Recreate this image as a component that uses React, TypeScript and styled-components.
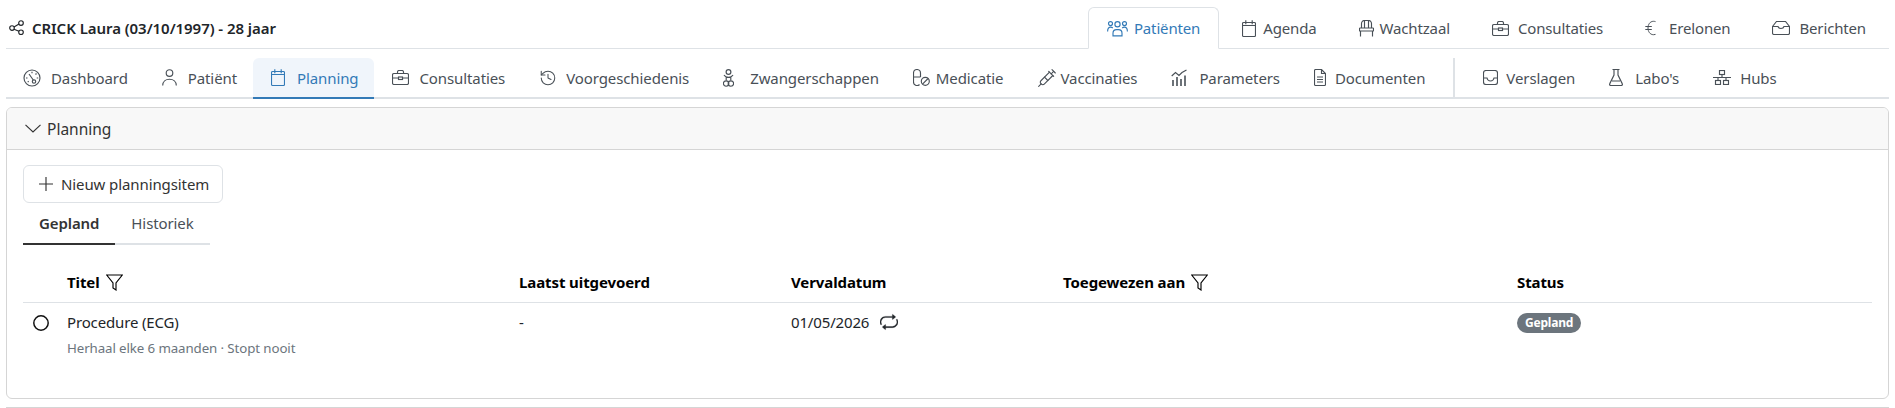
import React from "react";
import styled, { createGlobalStyle } from "styled-components";
import { History, Syringe } from "lucide-react";
import { BsRepeat } from "react-icons/bs";

const Global = createGlobalStyle`
  html, body { margin: 0; padding: 0; background: #fff; }
  body { font-family: "Noto Sans", sans-serif; font-size: 15px; color: #212529; }
  * { box-sizing: border-box; }
`;
const Svg = styled.svg`flex: none; fill: none; stroke: currentColor; stroke-width: 1.15;`;
type IconProps = { w: number; h: number; children: React.ReactNode };
const Icon = ({ w, h, children }: IconProps) => <Svg width={w} height={h} viewBox={`0 0 ${w} ${h}`}>{children}</Svg>;

const Share = () => <Icon w={15} h={15}><circle cx="3" cy="8" r="2.3" /><circle cx="12" cy="3" r="2.3" /><circle cx="12" cy="12.3" r="2.3" /><path d="M5 7 10 4M5 9.2 10 11.3" /></Icon>;
const Users = () => <Icon w={21} h={17}><circle cx="10.5" cy="4.2" r="2.6" /><circle cx="3.5" cy="3.6" r="2" /><circle cx="17.5" cy="3.6" r="2" /><path d="M6 15.8v-2.6c0-2 1.6-3.6 3.6-3.6h1.8c2 0 3.6 1.6 3.6 3.6v2.6zM.6 11.5c0-3 1.2-4.4 3-4.4 1 0 1.6.3 2.2.9M20.4 11.5c0-3-1.2-4.4-3-4.4-1 0-1.6.3-2.2.9" /></Icon>;
const Calendar = () => <Icon w={14} h={17}><rect x=".5" y="2.5" width="13" height="14" rx="1" /><path d="M.5 5.5h13M3.8.3v4M10.2.3v4" /></Icon>;
const Chair = () => <Icon w={15} h={17}><path d="M2.5 8V3.5a3 3 0 0 1 3-3h4a3 3 0 0 1 3 3V8M5.5 1v7M9.5 1v7M1.500 11v5.500M13.500 11v5.500" /><rect x=".5" y="8" width="14" height="3" rx=".6" /></Icon>;
const Briefcase = () => <Icon w={17} h={15}><rect x=".5" y="3.5" width="16" height="11" rx="1.5" /><path d="M5.5 3.5V2A1.5 1.5 0 0 1 7 .5h3A1.5 1.5 0 0 1 11.5 2v1.5M.5 8h6M10.5 8h6" /><rect x="6.5" y="7" width="4" height="2.5" /></Icon>;
const Euro = () => <Icon w={11} h={16}><path strokeWidth="1" d="M10.500 1.600a7 7 0 0 0-2-.3C5 1.300 3 4.500 3 8s2 6.700 5.500 6.700c.7 0 1.400-.1 2-.3M.3 6.500h6.500M.3 9.500h6.500" /></Icon>;
const Envelope = () => <Icon w={18} h={14}><path d="M.5 5.500 4.500.5h9l4 5V12a1.500 1.500 0 0 1-1.500 1.500H2A1.500 1.500 0 0 1 .5 12zM.5 5.500H6c.4 1.400 1.400 2 3 2s2.600-.6 3-2h5.500" /></Icon>;
const Gauge = () => <Icon w={18} h={18}><circle cx="9" cy="9" r="8" /><circle cx="11" cy="12.500" r="1.700" /><path d="M6 5 10.300 11M9 2.800v1.500M13.500 4.500l-1 1M15.200 9h-1.500M3 9h1.500M4.700 13l1-.7" /></Icon>;
const Person = () => <Icon w={15} h={17}><circle cx="7.500" cy="4" r="3.300" /><path d="M.7 16.500c0-4 3-6.300 6.800-6.300s6.800 2.300 6.800 6.300" /></Icon>;
const Baby = () => <Icon w={11} h={18}><circle cx="5.500" cy="3" r="2.400" /><path d="M1 6c1 1.800 2.800 2.300 4.500 2.300S9 7.800 10 6M3.200 8v3.500M7.800 8v3.500" /><circle cx="3.100" cy="14.500" r="2.700" /><circle cx="7.900" cy="14.500" r="2.700" /></Icon>;
const Pill = () => <Icon w={17} h={17}><path d="M7.500 8V4a3.500 3.500 0 0 0-7 0v9a3.500 3.500 0 0 0 6 2.500M.5 8h7" /><circle cx="12.300" cy="12.300" r="4" /><path d="M9.500 15.100 15.100 9.500" /></Icon>;
const Params = () => <Icon w={16} h={17}><path d="M.7 7 4.500 3.500 8 6.500 11 3.500 15.500 1" /><path strokeWidth="1.600" d="M2 11v6M6 8v9M10 10v7M14 6.500V17" /></Icon>;
const Doc = () => <Icon w={12} h={17}><path d="M1.500.5h6l4 4v11a1 1 0 0 1-1 1h-9a1 1 0 0 1-1-1v-14a1 1 0 0 1 1-1zM7.500.5v4h4M3 8h6M3 10.500h6M3 13h6" /></Icon>;
const Tray = () => <Icon w={15} h={15}><rect x=".5" y=".5" width="14" height="14" rx="2.500" /><path d="M.5 8H4c.4 2 1.500 3 3.500 3s3.100-1 3.500-3h3.500" /></Icon>;
const Flask = () => <Icon w={14} h={17}><path d="M3.500.5h7M5 .5v5.500L.8 14.600a1.200 1.200 0 0 0 1 1.900h10.400a1.200 1.200 0 0 0 1-1.900L9 6V.5M3 12h8" /></Icon>;
const Hubs = () => <Icon w={18} h={15}><rect x="6.500" y=".5" width="5" height="4" /><rect x="2.500" y="10.500" width="5" height="4" /><rect x="10.500" y="10.500" width="5" height="4" /><path d="M9 4.500v3M0 7.500h18M5 7.500v3M13 7.500v3" /></Icon>;
const Hist = () => <History size={18} strokeWidth={1.400} />;
const Syr = () => <Syringe size={20} strokeWidth={1.300} />;
const Funnel = () => <Icon w={17} h={17}><path d="M.7 1h15.600L10 9v7l-3-2V9z" /></Icon>;
const Plus = () => <Icon w={14} h={14}><path d="M7 0v14M0 7h14" /></Icon>;
const Radio = () => <Icon w={16} h={16}><circle cx="8" cy="8" r="7.200" strokeWidth="1.500" /></Icon>;
const Chevron = () => <Icon w={16} h={9}><path d="M.5.8 8 8 15.500.8" /></Icon>;

const Page = styled.div`height: 408px; overflow: hidden; padding: 0 6px;`;
const TopBar = styled.header`display: flex; align-items: flex-end; justify-content: space-between; height: 49px; border-bottom: 1px solid #dee2e6;`;
const Title = styled.div`display: flex; align-items: center; gap: 8px; height: 41px; padding-left: 3px; font-weight: 600; font-size: 15px; letter-spacing: -0.05px; color: #212529;`;
const TopTabs = styled.nav`display: flex; gap: 4px; margin-bottom: -1px; padding-right: 4px;`;
const TopTab = styled.div<{ $active?: boolean; $gap: number }>`
  display: flex; align-items: center; gap: ${p => p.$gap}px; height: 42px; padding: 0 18px; border: 1px solid ${p => p.$active ? "#dee2e6" : "transparent"};
  border-bottom-color: ${p => p.$active ? "#fff" : "transparent"}; border-radius: 6px 6px 0 0; color: ${p => p.$active ? "#337ab7" : "#495057"}; letter-spacing: -0.15px;
`;
const Nav = styled.nav`display: flex; align-items: flex-end; height: 50px; border-bottom: 2px solid #dee2e6;`;
const NavTab = styled.div<{ $active?: boolean; $gap: number }>`
  display: flex; align-items: center; gap: ${p => p.$gap}px; height: 41px; padding: 0 16px 0 18px; margin-bottom: -2px; border-radius: 6px 6px 0 0;
  color: ${p => p.$active ? "#337ab7" : "#495057"}; background: ${p => p.$active ? "#f0f5fb" : "transparent"};
  border-bottom: 2px solid ${p => p.$active ? "#337ab7" : "transparent"}; letter-spacing: -0.1px;
  &:first-child { padding-left: 17px; }
`;
const Divider = styled.div`flex: none; width: 2px; height: 39px; background: #dee2e6; margin: 0 10px 0 12px;`;
const Card = styled.section`margin-top: 8px; height: 292px; border: 1px solid #d5d5d5; border-radius: 6px; overflow: hidden;`;
const CardHeader = styled.div`display: flex; align-items: center; gap: 6px; height: 42px; padding: 0 18px; background: #f8f8f8; border-bottom: 1px solid #d5d5d5; color: #333; font-size: 15.500px;`;
const CardBody = styled.div`padding: 15px 16px 0;`;
const AddButton = styled.button`display: flex; align-items: center; gap: 8px; height: 38px; width: 200px; padding: 0 15px; font: inherit; white-space: nowrap; color: #333; letter-spacing: -0.1px; background: #fff; border: 1px solid #dee2e6; border-radius: 6px;`;
const SubTabs = styled.div`display: flex; height: 42px; border-bottom: 2px solid #dee2e6; width: 187px;`;
const SubTab = styled.div<{ $active?: boolean }>`
  display: flex; align-items: center; height: 42px; padding: 0 16px; font-weight: ${p => p.$active ? 600 : 400}; color: ${p => p.$active ? "#333" : "#495057"}; letter-spacing: -0.100px;
  border-bottom: 2px solid ${p => p.$active ? "#333" : "transparent"};
`;
const Grid = styled.div`display: grid; grid-template-columns: 44px 452px 272px 272px 454px 1fr; margin-top: 19px;`;
const Head = styled.div`display: flex; align-items: center; gap: 6px; height: 39px; padding-bottom: 2px; border-bottom: 1px solid #dee2e6; font-weight: 700; color: #000; font-size: 15px; letter-spacing: -0.1px;`;
const Cell = styled.div`padding-top: 9px; font-size: 15px; color: #212529; letter-spacing: -0.15px; display: flex; flex-direction: column; align-items: flex-start;`;
const RadioCell = styled(Cell)`padding: 12px 0 0 10px; color: #111;`;
const Sub = styled.div`margin-top: 7px; font-size: 13.300px; color: #6c757d; letter-spacing: -0.100px;`;
const DateLine = styled.div`display: flex; align-items: center; gap: 11px; svg { font-size: 18px; stroke-width: 0.3px; stroke: currentColor; }`;
const Badge = styled.span`display: inline-block; margin-top: 1px; padding: 0 8px; height: 20px; line-height: 20px; border-radius: 10px; background: #6c757d; color: #fff; font-size: 12px; font-weight: 700; letter-spacing: -0.200px;`;
const Foot = styled.div`height: 1px; margin-top: 8px; background: #d5d5d5;`;

type Tab = [React.ComponentType, string, number];
const top: Tab[] = [[Users, "Patiënten", 6], [Calendar, "Agenda", 7], [Chair, "Wachtzaal", 6], [Briefcase, "Consultaties", 9], [Euro, "Erelonen", 13], [Envelope, "Berichten", 9]];
const nav1: Tab[] = [[Gauge, "Dashboard", 10], [Person, "Patiënt", 11], [Calendar, "Planning", 12], [Briefcase, "Consultaties", 10], [Hist, "Voorgeschiedenis", 9], [Baby, "Zwangerschappen", 16], [Pill, "Medicatie", 6], [Syr, "Vaccinaties", 3], [Params, "Parameters", 12], [Doc, "Documenten", 9]];
const nav2: Tab[] = [[Tray, "Verslagen", 8], [Flask, "Labo's", 12], [Hubs, "Hubs", 9]];

export default function App() {
  return (
    <Page>
      <Global />
      <TopBar>
        <Title><Share />CRICK Laura (03/10/1997) - 28 jaar</Title>
        <TopTabs>
          {top.map(([I, t, g]) => <TopTab key={t} $gap={g} $active={t === "Patiënten"}><I />{t}</TopTab>)}
        </TopTabs>
      </TopBar>
      <Nav>
        {nav1.map(([I, t, g]) => <NavTab key={t} $gap={g} $active={t === "Planning"}><I />{t}</NavTab>)}
        <Divider />
        {nav2.map(([I, t, g]) => <NavTab key={t} $gap={g}><I />{t}</NavTab>)}
      </Nav>
      <Card>
        <CardHeader><Chevron />Planning</CardHeader>
        <CardBody>
          <AddButton><Plus />Nieuw planningsitem</AddButton>
          <SubTabs><SubTab $active>Gepland</SubTab><SubTab>Historiek</SubTab></SubTabs>
          <Grid>
            <Head />
            <Head>Titel <Funnel /></Head>
            <Head>Laatst uitgevoerd</Head>
            <Head>Vervaldatum</Head>
            <Head>Toegewezen aan <Funnel /></Head>
            <Head>Status</Head>
            <RadioCell><Radio /></RadioCell>
            <Cell>Procedure (ECG)<Sub>Herhaal elke 6 maanden · Stopt nooit</Sub></Cell>
            <Cell>-</Cell>
            <Cell><DateLine>01/05/2026 <BsRepeat /></DateLine></Cell>
            <Cell />
            <Cell><Badge>Gepland</Badge></Cell>
          </Grid>
        </CardBody>
      </Card>
      <Foot />
    </Page>
  );
}
